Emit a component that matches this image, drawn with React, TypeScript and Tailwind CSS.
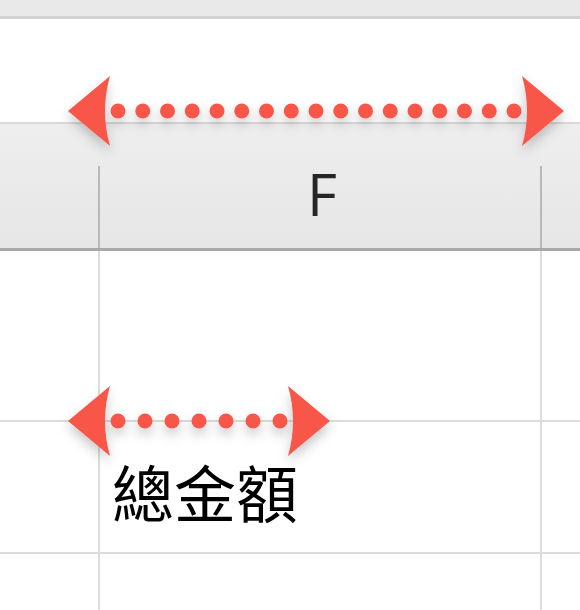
import React from "react";

const RED = "#f7574a";

const Arrow = ({ width, dots }: { width: number; dots: number }) => {
  const h = 80;
  const mid = h / 2;
  const start = 50;
  const end = width - 50;
  const step = (end - start) / (dots - 1);
  return (
    <svg width={width} height={h} viewBox={`0 0 ${width} ${h}`} className="overflow-visible">
      <defs>
        <filter id={`sh${width}`} x="-20%" y="-50%" width="140%" height="200%">
          <feDropShadow dx="0" dy="6" stdDeviation="6" floodColor="#000" floodOpacity="0.22" />
        </filter>
      </defs>
      <g filter={`url(#sh${width})`}>
        <path d={`M0 ${mid} L42 ${mid - 35} Q32 ${mid} 42 ${mid + 35} Z`} fill={RED} />
        <path d={`M${width} ${mid} L${width - 42} ${mid - 35} Q${width - 32} ${mid} ${width - 42} ${mid + 35} Z`} fill={RED} />
        {Array.from({ length: dots }).map((_, i) => (
          <circle key={i} cx={start + i * step} cy={mid} r="7.5" fill={RED} />
        ))}
      </g>
    </svg>
  );
};

export default function App() {
  return (
    <div className="relative w-[580px] h-[610px] overflow-hidden bg-white flex flex-col">
      <div className="h-[19px] bg-[#e9e9e9] border-b-[3px] border-[#d2d2d2] shrink-0" />
      <div className="h-[103px] bg-white shrink-0" />
      <div className="h-[129px] shrink-0 flex bg-gradient-to-b from-[#eeeeee] to-[#e6e6e6] border-t-2 border-[#d9d9d9] border-b-[3px] border-b-[#a9a9a9]">
        <div className="w-[98px]" />
        <div className="w-[2px] self-end h-[82px] bg-[#b9b9b9]" />
        <div className="w-[440px] flex items-center justify-center">
          <span className="text-[58px] leading-none text-[#262626] pt-[16px] pl-[4px]" style={{ fontFamily: '"Open Sans", "Noto Sans", sans-serif' }}>
            F
          </span>
        </div>
        <div className="w-[2px] self-end h-[82px] bg-[#b9b9b9]" />
        <div className="flex-1" />
      </div>
      <div className="flex flex-1 flex-col">
        <div className="h-[171px] flex border-b-2 border-[#dcdcdc]">
          <div className="w-[98px]" />
          <div className="w-[2px] bg-[#dcdcdc]" />
          <div className="w-[440px]" />
          <div className="w-[2px] bg-[#dcdcdc]" />
        </div>
        <div className="h-[132px] flex border-b-2 border-[#dcdcdc]">
          <div className="w-[98px]" />
          <div className="w-[2px] bg-[#dcdcdc]" />
          <div className="w-[440px] flex items-end pl-[12px] pb-[30px]">
            <span
              className="text-[62px] leading-none text-black"
              style={{ fontFamily: '"Noto Sans CJK TC", "Noto Sans CJK SC", sans-serif' }}
            >
              總金額
            </span>
          </div>
          <div className="w-[2px] bg-[#dcdcdc]" />
        </div>
        <div className="flex flex-1">
          <div className="w-[98px]" />
          <div className="w-[2px] bg-[#dcdcdc]" />
          <div className="w-[440px]" />
          <div className="w-[2px] bg-[#dcdcdc]" />
        </div>
      </div>
      <div className="absolute left-[68px] top-[71px]">
        <Arrow width={496} dots={17} />
      </div>
      <div className="absolute left-[68px] top-[381px]">
        <Arrow width={262} dots={7} />
      </div>
    </div>
  );
}
